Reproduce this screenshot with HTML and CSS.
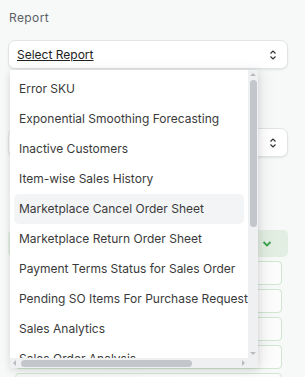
FILE: index.html
```html
<!DOCTYPE html>
<html lang="en">
<head>
    <meta charset="UTF-8">
    <meta name="viewport" content="width=device-width, initial-scale=1.0">
    <title>Report</title>
    <link rel="stylesheet" href="styles.css">
</head>
<body>
    <div class="panel">
        <div class="label">Report</div>
        <div class="field">
            <div class="select">
                <span class="select-text">Select Report</span>
                <svg class="updown" width="8" height="12" viewBox="0 0 8 12"><path d="M1.5 4.5 L4 2 L6.5 4.5 M1.5 7.5 L4 10 L6.5 7.5" fill="none" stroke="#333" stroke-width="1.2"/></svg>
            </div>

            <div class="dropdown">
                <div class="list">
                    <div class="option">Error SKU</div>
                    <div class="option">Exponential Smoothing Forecasting</div>
                    <div class="option">Inactive Customers</div>
                    <div class="option">Item-wise Sales History</div>
                    <div class="option hover">Marketplace Cancel Order Sheet</div>
                    <div class="option">Marketplace Return Order Sheet</div>
                    <div class="option">Payment Terms Status for Sales Order</div>
                    <div class="option">Pending SO Items For Purchase Request</div>
                    <div class="option">Sales Analytics</div>
                    <div class="option">Sales Order Analysis</div>
                </div>
                <div class="vbar">
                    <span class="arrow up"></span>
                    <span class="vthumb"></span>
                    <span class="arrow down"></span>
                </div>
                <div class="hbar">
                    <span class="arrow left"></span>
                    <span class="hthumb"></span>
                    <span class="arrow right"></span>
                </div>
                <div class="corner"></div>
            </div>
        </div>

        <div class="gap-label"></div>
        <div class="select short">
            <span></span>
            <svg class="updown" width="8" height="12" viewBox="0 0 8 12"><path d="M1.5 4.5 L4 2 L6.5 4.5 M1.5 7.5 L4 10 L6.5 7.5" fill="none" stroke="#333" stroke-width="1.2"/></svg>
        </div>

        <div class="group-head">
            <svg width="10" height="8" viewBox="0 0 10 8"><path d="M1.5 2 L5 5.5 L8.5 2" fill="none" stroke="#3aa34a" stroke-width="1.8"/></svg>
        </div>
        <div class="rows">
            <div class="row-box"></div>
            <div class="row-box"></div>
            <div class="row-box"></div>
            <div class="row-box"></div>
            <div class="row-box"></div>
        </div>
    </div>
</body>
</html>
```

FILE: styles.css
```css
body {
    margin: 0;
    height: 100vh;
    background: #f7f8f8;
    font-family: Inter, "Noto Sans", sans-serif;
    color: #333;
    overflow: hidden;
}
.panel {
    height: 100%;
    box-sizing: border-box;
    overflow: hidden;
    padding: 11px 17px 0 8px;
}
.label {
    font-size: 12px;
    color: #5b6167;
    letter-spacing: 0.4px;
    line-height: 14px;
    padding-left: 1px;
}
.field {
    position: relative;
    margin-top: 15px;
}
.select {
    height: 27px;
    background: #fff;
    border: 1px solid #e1e4e7;
    border-radius: 7px;
    box-shadow: 0 1px 2px rgba(0,0,0,0.08);
    display: flex;
    align-items: center;
    justify-content: space-between;
    padding: 0 10px 0 8px;
    font-size: 12px;
}
.select-text {
    text-decoration: underline;
    color: #222;
}
.updown { display: block; }

.dropdown {
    position: absolute;
    top: 30px;
    left: 2px;
    width: 248px;
    height: 298px;
    background: #fff;
    box-shadow: 0 2px 8px rgba(0,0,0,0.12), 6px 0 14px rgba(0,0,0,0.05);
    display: grid;
    grid-template-columns: 1fr 10px;
    grid-template-rows: 1fr 10px;
    z-index: 2;
}
.list {
    overflow: hidden;
    padding: 4px 4px 0 4px;
}
.option {
    height: 30px;
    line-height: 30px;
    padding-left: 5px;
    font-size: 12px;
    color: #3a3a3a;
    white-space: nowrap;
    border-radius: 5px;
}
.option.hover { background: #f3f4f6; }

.vbar, .hbar, .corner { background: #eef0f2; }
.vbar {
    display: flex;
    flex-direction: column;
    align-items: center;
    padding: 3px 0;
}
.vthumb {
    width: 7px;
    height: 147px;
    margin-top: 4px;
    border-radius: 4px;
    background: #c3c6cb;
}
.vbar .down { margin-top: auto; }
.hbar {
    display: flex;
    align-items: center;
    padding: 0 3px;
}
.hthumb {
    height: 7px;
    width: 171px;
    margin-left: 5px;
    border-radius: 4px;
    background: #c3c6cb;
}
.hbar .right { margin-left: auto; }
.arrow {
    width: 0;
    height: 0;
    border: 3px solid transparent;
}
.arrow.up { border-bottom-color: #b8bbbf; border-top-width: 0; }
.arrow.down { border-top-color: #b8bbbf; border-bottom-width: 0; }
.arrow.left { border-right-color: #b8bbbf; border-left-width: 0; }
.arrow.right { border-left-color: #b8bbbf; border-right-width: 0; }

.gap-label { height: 59px; }
.short { padding-left: 8px; }

.group-head {
    margin-top: 73px;
    height: 27px;
    background: #e3eee3;
    border-radius: 5px;
    display: flex;
    align-items: center;
    justify-content: flex-end;
    padding-right: 16px;
}
.rows {
    display: flex;
    flex-direction: column;
    gap: 4px;
    margin: 4px 6px 0 7px;
}
.row-box {
    height: 22px;
    flex-shrink: 0;
    border: 1px solid #cfe6cf;
    border-radius: 4px;
    background: linear-gradient(to right, #f4f5f5, #fcfcfc);
}
```
